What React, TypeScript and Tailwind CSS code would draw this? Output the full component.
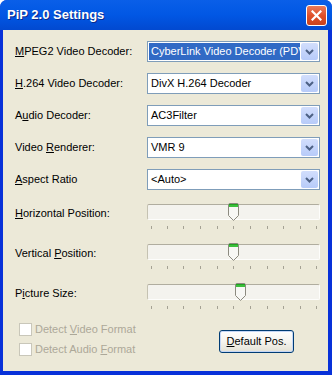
import React from "react";

const font = { fontFamily: '"Liberation Sans", Arial, sans-serif' };

const combos = [
  { label: "MPEG2 Video Decoder:", key: "M", rest: "PEG2 Video Decoder:", value: "CyberLink Video Decoder (PDVD8)", selected: true },
  { label: "H.264 Video Decoder:", key: "H", rest: ".264 Video Decoder:", value: "DivX H.264 Decoder" },
  { label: "Audio Decoder:", pre: "A", key: "u", rest: "dio Decoder:", value: "AC3Filter" },
  { label: "Video Renderer:", pre: "Video ", key: "R", rest: "enderer:", value: "VMR 9" },
  { label: "Aspect Ratio", key: "A", rest: "spect Ratio", value: "<Auto>" },
];

const sliders = [
  { pre: "", key: "H", rest: "orizontal Position:", thumb: 228 },
  { pre: "Vertical ", key: "P", rest: "osition:", thumb: 228 },
  { pre: "P", key: "i", rest: "cture Size:", thumb: 235 },
];

const ticks = [4, 20, 36, 53, 70, 86, 103, 120, 136, 153, 169];

function Chevron() {
  return (
    <div className="flex h-[17px] w-[17px] shrink-0 items-center justify-center rounded-[2px] bg-gradient-to-b from-[#d2defc] to-[#b7cbf9]">
      <svg width="9" height="6" viewBox="0 0 9 6">
        <path d="M1 1 L4.5 4.5 L8 1" stroke="#4d6185" strokeWidth="2" fill="none" />
      </svg>
    </div>
  );
}

function Combo({ value, selected }: { value: string; selected?: boolean }) {
  return (
    <div className="flex h-[21px] w-[173px] items-center border border-[#7f9db9] bg-white pl-[1px] pr-[1px]">
      <div className={`flex h-[17px] min-w-0 flex-1 items-center overflow-hidden whitespace-nowrap pl-[2px] ${selected ? "mr-[1px] bg-[#316ac5] text-white" : "text-black"}`}>
        {value}
      </div>
      <Chevron />
    </div>
  );
}

function Thumb() {
  return (
    <svg width="11" height="18" viewBox="0 0 11 18">
      <path d="M0.5 2 Q0.5 0.5 2 0.5 L9 0.5 Q10.5 0.5 10.5 2 L10.5 12.5 L5.5 17.5 L0.5 12.5 Z" fill="#f7f7f4" stroke="#8c8a7f" />
      <rect x="1" y="1" width="9" height="3" fill="#3cbf3c" />
      <rect x="1" y="1" width="9" height="1" fill="#21a121" />
    </svg>
  );
}

function Slider({ thumb }: { thumb: number }) {
  return (
    <div className="relative h-[40px] w-[173px]">
      <div className="h-[16px] w-[173px] rounded-[2px] border border-t-[#b0ad9f] border-l-[#c5c2b2] border-r-[#fdfdfb] border-b-[#fdfdfb] bg-[#f4f3ee]" />
      <div className="absolute top-[-1px]" style={{ left: thumb - 147 }}>
        <Thumb />
      </div>
      {ticks.map((t) => (
        <div key={t} className="absolute top-[22px] h-[3px] w-px bg-[#a5a294]" style={{ left: t }} />
      ))}
    </div>
  );
}

export default function App() {
  return (
    <div className="h-[375px] w-[332px] overflow-hidden rounded-t-[7px] bg-[#0831d9] text-[11px]" style={font}>
      {/* title bar */}
      <div className="flex h-[30px] items-center justify-between bg-gradient-to-b from-[#0a5fe8] via-[#0157e4] to-[#0249d0] pl-[7px] pr-[5px]">
        <span className="text-[13px] font-bold text-white [text-shadow:1px_1px_0_#0a2a8a]">PiP 2.0 Settings</span>
        <div className="flex h-[21px] w-[21px] items-center justify-center rounded-[3px] border border-white bg-gradient-to-b from-[#e87a5a] via-[#e0502a] to-[#c8421d]">
          <svg width="11" height="11" viewBox="0 0 11 11">
            <path d="M1.5 1.5 L9.5 9.5 M9.5 1.5 L1.5 9.5" stroke="white" strokeWidth="2.2" strokeLinecap="square" />
          </svg>
        </div>
      </div>

      {/* body */}
      <div className="ml-[3px] mr-[4px] flex h-[341px] flex-col bg-[#ece9d8] pl-[12px] pr-[8px] pt-[11px]">
        <div className="flex flex-col gap-[11px]">
          {combos.map((c) => (
            <div key={c.label} className="flex h-[21px] items-center justify-between">
              <span className="text-black">
                {c.pre}
                <u>{c.key}</u>
                {c.rest}
              </span>
              <Combo value={c.value} selected={c.selected} />
            </div>
          ))}
        </div>

        <div className="mt-[14px] flex flex-col">
          {sliders.map((s, i) => (
            <div key={i} className="flex justify-between">
              <span className="mt-[1px] text-black">
                {s.pre}
                <u>{s.key}</u>
                {s.rest}
              </span>
              <Slider thumb={s.thumb} />
            </div>
          ))}
        </div>

        <div className="mt-[-1px] flex items-start justify-between pl-[4px] pr-[26px]">
          <div className="flex flex-col gap-[7px] leading-[13px] text-[#aca899]">
            <label className="flex items-center gap-[3px]">
              <span className="h-[13px] w-[13px] border border-[#c9c7ba] bg-white" />
              <span>
                Detect <u>V</u>ideo Format
              </span>
            </label>
            <label className="flex items-center gap-[3px]">
              <span className="h-[13px] w-[13px] border border-[#c9c7ba] bg-white" />
              <span>
                Detect Audio <u>F</u>ormat
              </span>
            </label>
          </div>
          <button className="mt-[7px] h-[23px] w-[75px] rounded-[3px] border border-[#003c74] bg-gradient-to-b from-white via-[#f5f4ef] to-[#e3e1d5] text-black shadow-[inset_0_0_0_1px_#c4d6f5]">
            <u>D</u>efault Pos.
          </button>
        </div>
      </div>
      <div className="h-[4px]" />
    </div>
  );
}
